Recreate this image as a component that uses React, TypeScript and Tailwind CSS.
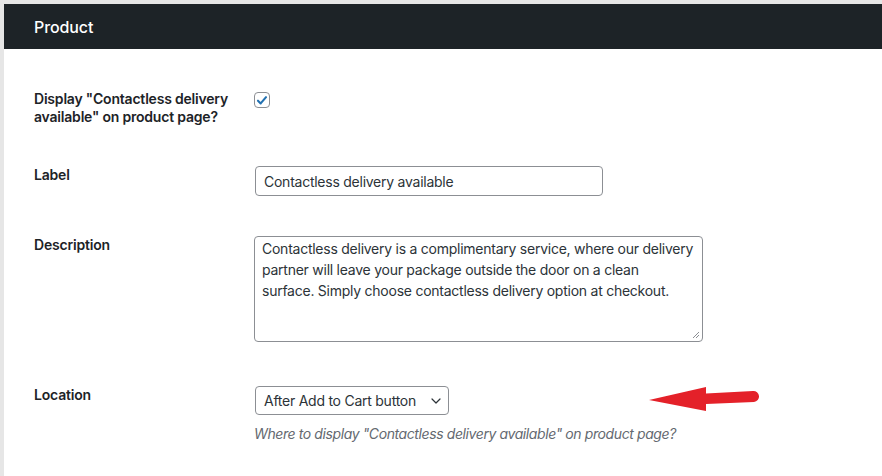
import { ChevronDown } from 'lucide-react'

const font = { fontFamily: 'Inter, "Noto Sans", sans-serif' }

const Row = ({
  label,
  className,
  children,
}: {
  label: React.ReactNode
  className: string
  children: React.ReactNode
}) => (
  <div className={`flex ${className}`}>
    <div className="w-[220px] shrink-0 text-[14px] font-semibold leading-[18px] tracking-[-0.2px] text-[#1d2327]">
      {label}
    </div>
    <div className="flex-1">{children}</div>
  </div>
)

const App = () => {
  return (
    <div
      className="h-[476px] w-[882px] overflow-hidden bg-[#e6e6e6] pl-[4px] pt-[4px]"
      style={font}
    >
      <div className="flex h-[45px] items-center bg-[#1d2327] pl-[30px] pt-[1px]">
        <h2 className="text-[16px] font-medium tracking-[-0.1px] text-white">Product</h2>
      </div>
      <div className="h-full bg-white pl-[30px] pt-[41px]">
        <Row
          label={
            <>
              Display "Contactless delivery
              <br />
              available" on product page?
            </>
          }
          className=""
        >
          <span className="mt-[2px] flex h-[16px] w-[16px] items-center justify-center rounded-[4px] border border-[#8c8f94] bg-white">
            <svg viewBox="0 0 16 16" className="h-[15px] w-[15px]">
              <path
                d="M3.4 8.2 L6.5 11.3 L12.6 4.2"
                fill="none"
                stroke="#2271b1"
                strokeWidth="2.4"
                strokeLinecap="round"
                strokeLinejoin="round"
              />
            </svg>
          </span>
        </Row>

        <Row label="Label" className="mt-[40px]">
          <div className="ml-[1px] flex h-[30px] w-[348px] items-center rounded-[4px] border border-[#8c8f94] px-[8px] text-[14px] tracking-[-0.25px] text-[#2c3338]">
            Contactless delivery available
          </div>
        </Row>

        <Row label="Description" className="mt-[40px]">
          <div className="relative h-[106px] w-[449px] whitespace-nowrap rounded-[4px] border border-[#8c8f94] px-[7px] pt-[1px] text-[14px] leading-[21px] tracking-[-0.25px] text-[#2c3338]">
            Contactless delivery is a complimentary service, where our delivery
            <br />
            partner will leave your package outside the door on a clean
            <br />
            surface. Simply choose contactless delivery option at checkout.
            <svg
              viewBox="0 0 8 8"
              className="absolute bottom-[2px] right-[2px] h-[8px] w-[8px]"
            >
              <path d="M7 1 L1 7 M7 4 L4 7" stroke="#8c8f94" strokeWidth="1" />
            </svg>
          </div>
        </Row>

        <Row label="Location" className="mt-[44px]">
          <div className="flex items-center">
            <div className="ml-[1px] flex h-[29px] w-[194px] items-center justify-between rounded-[4px] border border-[#8c8f94] pl-[8px] pr-[4px] text-[14px] tracking-[-0.25px] text-[#2c3338]">
              <span>After Add to Cart button</span>
              <ChevronDown size={16} strokeWidth={1.8} color="#2c3338" />
            </div>
            <svg
              viewBox="0 0 110 26"
              className="ml-[200px] mt-[-2px] h-[26px] w-[110px]"
            >
              <path
                d="M0 13 L57 0 L57 6.5 L104 4 A5.5 5.5 0 0 1 105 15 L57 17 L57 24 Z"
                fill="#e42129"
              />
            </svg>
          </div>
          <p className="mt-[8px] text-[14px] italic tracking-[-0.4px] text-[#646970]">
            Where to display "Contactless delivery available" on product page?
          </p>
        </Row>
      </div>
    </div>
  )
}

export default App
